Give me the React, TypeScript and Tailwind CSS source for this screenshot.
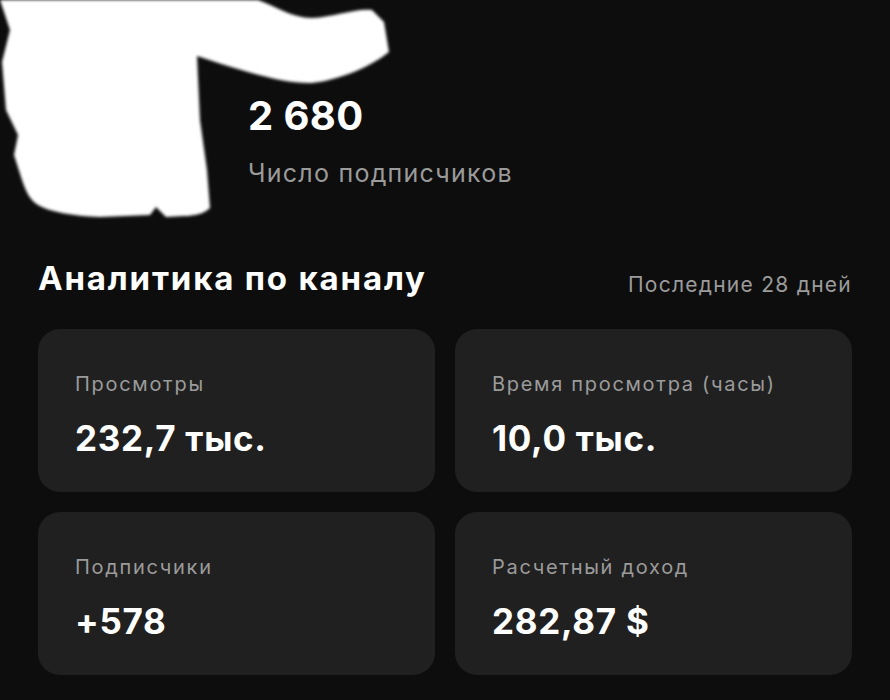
const stats = [
  { label: "Просмотры", value: "232,7 тыс." },
  { label: "Время просмотра (часы)", value: "10,0 тыс." },
  { label: "Подписчики", value: "+578" },
  { label: "Расчетный доход", value: "282,87 $" },
]

// Scribbled-over channel avatar
const Scribble = () => (
  <svg className="absolute left-0 top-0" width="400" height="225" viewBox="0 0 400 225">
    <defs>
      <filter id="soft" x="-5%" y="-5%" width="110%" height="110%">
        <feGaussianBlur stdDeviation="1.6" />
      </filter>
    </defs>
    <path
      filter="url(#soft)"
      fill="#fff"
      d="M0,0 L258,0 C275,6 292,18 312,18 C335,17 355,8 372,10 L384,22 L389,52 C372,66 340,80 312,83 C285,84 252,74 197,56 L200,120 L207,170 L210,208 C204,214 194,216 184,216 L166,217 L156,207 L150,215 L100,217 C72,216 50,212 38,205 C30,200 26,192 22,180 L14,155 L18,135 L6,110 L2,62 L10,30 Z"
    />
  </svg>
)

export default function App() {
  return (
    <div className="min-h-screen bg-[#0d0d0d] text-white font-['Inter',sans-serif] overflow-hidden">
      <div className="relative h-[248px]">
        <Scribble />
        <div className="pl-[248px] pt-[96px]">
          <div className="text-[40px] font-bold leading-none tracking-[0.01em]">2 680</div>
          <div className="mt-[25px] text-[25px] leading-none text-[#9b9b9b] tracking-[0.05em]">Число подписчиков</div>
        </div>
      </div>

      <div className="px-[38px]">
        <div className="flex items-end justify-between pt-[14px]">
          <h2 className="text-[33px] font-bold leading-none tracking-[0.055em]">Аналитика по каналу</h2>
          <span className="text-[21px] leading-none text-[#9b9b9b] tracking-[0.06em]">Последние 28 дней</span>
        </div>

        <div className="mt-[34px] grid grid-cols-2 gap-[20px]">
          {stats.map((s) => (
            <div key={s.label} className="h-[163px] rounded-[22px] bg-[#202020] pl-[37px] pt-[45px]">
              <div className="text-[20px] leading-none text-[#9b9b9b] tracking-[0.085em]">{s.label}</div>
              <div className="mt-[27px] text-[35px] font-bold leading-none tracking-[0.02em]">{s.value}</div>
            </div>
          ))}
        </div>
      </div>
    </div>
  )
}
